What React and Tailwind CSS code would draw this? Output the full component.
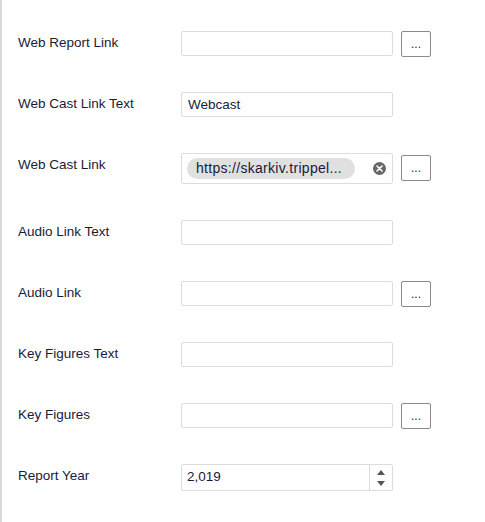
import React from 'react'

const labelCls = 'w-[163px] shrink-0 pt-[4px] leading-[16px] text-[13.5px] text-[#1a1a38]'
const inputCls =
  'w-[212px] h-[25px] rounded-[2px] border border-[#dcdcdc] bg-white px-[6px] text-[13.5px] text-[#1a1a38] outline-none'

function DotsButton() {
  return (
    <button className="ml-[8px] -mb-px flex h-[26px] w-[30px] items-center justify-center rounded-[2px] border border-[#8a8a8a] bg-white text-[12px] leading-none text-[#1a237e]">
      ...
    </button>
  )
}

function Row({ label, children }) {
  return (
    <div className="flex items-start">
      <div className={labelCls}>{label}</div>
      {children}
    </div>
  )
}

export default function App() {
  return (
    <div
      className="min-h-[522px] w-[485px] border-l-2 border-[#d9d9d9] bg-white pl-[16px] pt-[31px]"
      style={{ fontFamily: '"Liberation Sans", Arial, sans-serif' }}
    >
      <div className="flex flex-col gap-[36px]">
        <Row label="Web Report Link">
          <input className={inputCls} defaultValue="" />
          <DotsButton />
        </Row>

        <Row label="Web Cast Link Text">
          <input className={inputCls} defaultValue="Webcast" />
        </Row>

        <Row label="Web Cast Link">
          <div className="flex h-[31px] w-[212px] items-center rounded-[2px] border border-[#dcdcdc] bg-white pl-[5px] pr-[6px]">
            <span className="flex h-[21px] w-[168px] items-center rounded-full bg-[#e0e0e0] px-[9px] text-[14px] tracking-[0.3px] text-[#1a1a38]">
              https://skarkiv.trippel...
            </span>
            <span className="ml-auto flex h-[13px] w-[13px] items-center justify-center rounded-full bg-[#666]">
              <svg width="7" height="7" viewBox="0 0 7 7">
                <path d="M1 1L6 6M6 1L1 6" stroke="white" strokeWidth="1.6" strokeLinecap="round" />
              </svg>
            </span>
          </div>
          <div className="pt-[2px]">
            <DotsButton />
          </div>
        </Row>

        <Row label="Audio Link Text">
          <input className={inputCls} defaultValue="" />
        </Row>

        <Row label="Audio Link">
          <input className={inputCls} defaultValue="" />
          <DotsButton />
        </Row>

        <Row label="Key Figures Text">
          <input className={inputCls} defaultValue="" />
        </Row>

        <Row label="Key Figures">
          <input className={inputCls} defaultValue="" />
          <DotsButton />
        </Row>

        <Row label="Report Year">
          <div className="flex h-[27px] w-[212px] items-stretch rounded-[2px] border border-[#dcdcdc] bg-white">
            <span className="flex flex-1 items-center px-[5px] text-[13.5px] text-[#1a1a38]">2,019</span>
            <span className="flex w-[23px] flex-col items-center justify-center gap-[6px] border-l border-[#dcdcdc]">
              <svg width="8" height="5" viewBox="0 0 8 5">
                <path d="M4 0L8 5H0Z" fill="#555" />
              </svg>
              <svg width="8" height="5" viewBox="0 0 8 5">
                <path d="M0 0H8L4 5Z" fill="#555" />
              </svg>
            </span>
          </div>
        </Row>
      </div>
    </div>
  )
}
